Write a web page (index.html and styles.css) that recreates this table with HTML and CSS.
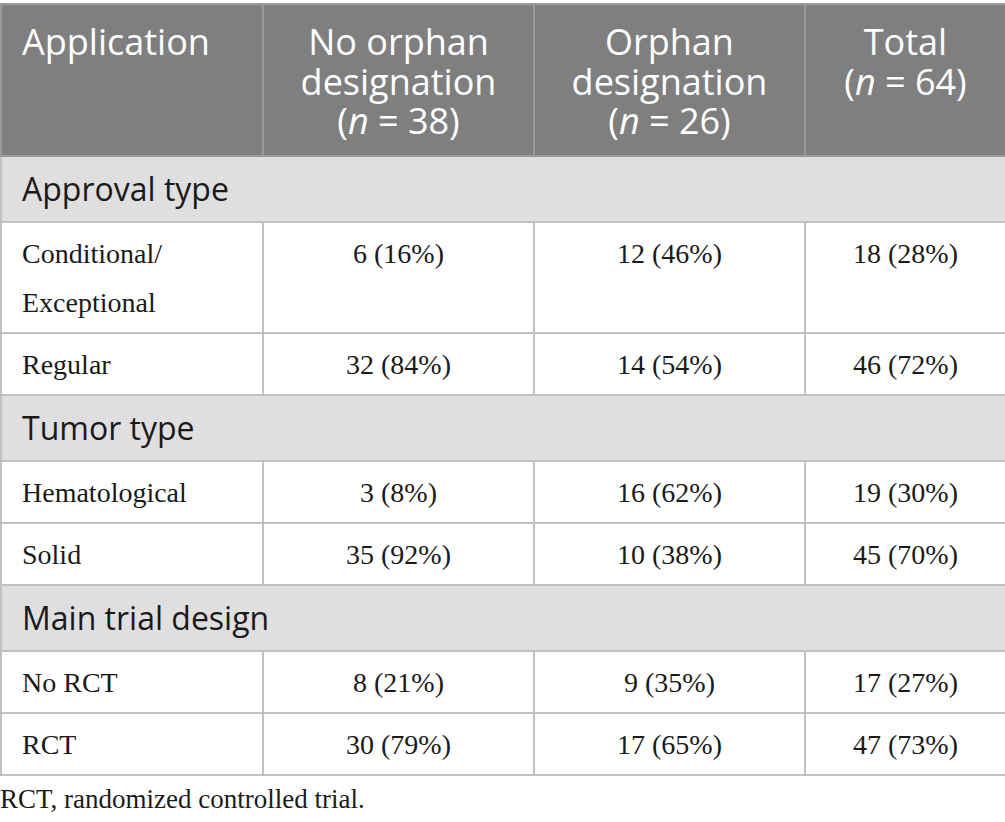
FILE: index.html
```html
<!DOCTYPE html>
<html>
<head>
<meta charset="utf-8">
<link rel="stylesheet" href="styles.css">
</head>
<body>
<table class="data">
  <colgroup>
    <col class="c1"><col class="c2"><col class="c3"><col class="c4">
  </colgroup>
  <thead>
    <tr>
      <th class="left">Application</th>
      <th>No orphan<br>designation<br>(<i>n</i> = 38)</th>
      <th>Orphan<br>designation<br>(<i>n</i> = 26)</th>
      <th>Total<br>(<i>n</i> = 64)</th>
    </tr>
  </thead>
  <tbody>
    <tr class="section"><td colspan="4">Approval type</td></tr>
    <tr><td class="label">Conditional/<br>Exceptional</td><td>6 (16%)</td><td>12 (46%)</td><td>18 (28%)</td></tr>
    <tr><td class="label">Regular</td><td>32 (84%)</td><td>14 (54%)</td><td>46 (72%)</td></tr>
    <tr class="section"><td colspan="4">Tumor type</td></tr>
    <tr><td class="label">Hematological</td><td>3 (8%)</td><td>16 (62%)</td><td>19 (30%)</td></tr>
    <tr><td class="label">Solid</td><td>35 (92%)</td><td>10 (38%)</td><td>45 (70%)</td></tr>
    <tr class="section"><td colspan="4">Main trial design</td></tr>
    <tr><td class="label">No RCT</td><td>8 (21%)</td><td>9 (35%)</td><td>17 (27%)</td></tr>
    <tr><td class="label">RCT</td><td>30 (79%)</td><td>17 (65%)</td><td>47 (73%)</td></tr>
  </tbody>
</table>
<p class="note">RCT, randomized controlled trial.</p>
</body>
</html>
```
FILE: styles.css
```css
html, body {
  margin: 0;
  padding: 0;
  background: #ffffff;
}
body {
  padding-top: 3px;
  font-family: "Liberation Serif", "Times New Roman", serif;
  color: #1a1a1a;
}
.data {
  border-collapse: collapse;
  width: 1005px;
  table-layout: fixed;
}
.c1 { width: 262px; }
.c2 { width: 271px; }
.c3 { width: 271px; }
.c4 { width: 201px; }
.data th, .data td {
  border: 2px solid #c0c0c0;
}
.data th {
  background: #7f7f7f;
  color: #ffffff;
  font-family: "Open Sans", "Noto Sans", sans-serif;
  font-weight: 400;
  font-size: 36px;
  line-height: 39.5px;
  padding: 17px 8px 14px;
  text-align: center;
  vertical-align: top;
  border-color: #9a9a9a;
}
.data th.left {
  text-align: left;
  padding-left: 20px;
}
.data td {
  font-size: 28px;
  line-height: 49px;
  padding: 6px 20px 5px;
  text-align: center;
  vertical-align: top;
}
.data td.label {
  text-align: left;
}
.data tr.section td {
  background: #e0dfe0;
  font-family: "Open Sans", "Noto Sans", sans-serif;
  font-size: 32px;
  line-height: 40px;
  padding: 12px 20px 12px;
  text-align: left;
  color: #1a1a1a;
}
.note {
  margin: 8px 0 0;
  font-size: 27px;
  line-height: 30px;
}
```
